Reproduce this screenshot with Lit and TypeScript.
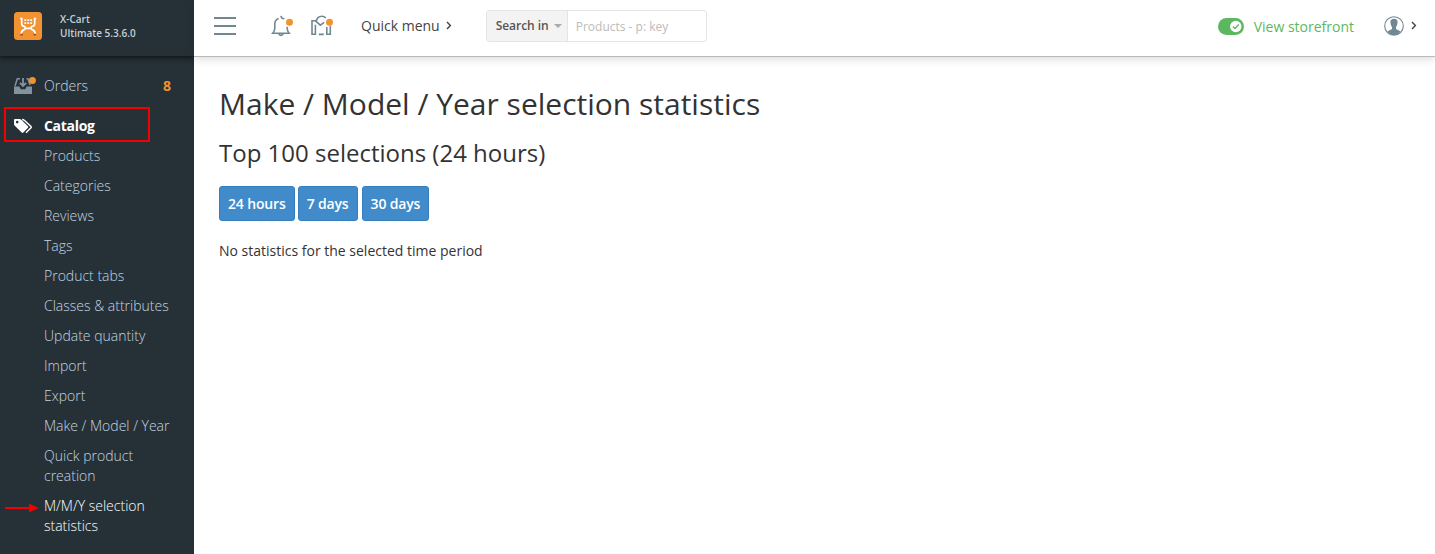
import { LitElement, html, css, svg } from "lit";
import { customElement } from "lit/decorators.js";

const links = [
  "Products", "Categories", "Reviews", "Tags", "Product tabs", "Classes & attributes",
  "Update quantity", "Import", "Export", "Make / Model / Year", "Quick product creation",
];

@customElement("side-menu")
class SideMenu extends LitElement {
  static styles = css`
    :host { display: flex; flex-direction: column; width: 194px; height: 554px; background: #253137; color: #c4d4e0; font-size: 14px; line-height: 20px; overflow: hidden; }
    .brand { display: flex; height: 56px; flex: none; padding: 12px 0 0 14px; box-sizing: border-box; box-shadow: 0 1px 5px 1px rgba(8, 14, 17, .75); gap: 18px; }
    .logo { display: block; flex: none; }
    .name { font-size: 10px; line-height: 14px; font-weight: 600; color: #c3d0d8; }
    .row { display: flex; align-items: center; height: 40px; padding-left: 14px; box-sizing: border-box; flex: none; }
    .orders { margin-top: 10px; font-weight: 300; }
    .row svg { width: 30px; height: 22px; flex: none; }
    .count { margin-left: auto; margin-right: 23px; color: #f1922f; font-weight: 700; }
    .catalog { width: 146px; height: 35px; margin: 1px 0 -1px 4px; padding: 2px 0 0 8px; border: 2px solid #f40000; color: #fff; font-weight: 700; letter-spacing: -.3px; }
    .list { padding: 0; margin: 0; list-style: none; width: 194px; font-weight: 300; }
    .list li { padding: 5px 20px 5px 44px; }
    .list .narrow { padding-right: 46px; }
    .list .active { display: flex; padding: 5px 40px 5px 4px; color: #fff; }
    .active svg { flex: none; width: 40px; height: 20px; }
  `;
  render() {
    return html`
      <div class="brand">
        <svg class="logo" width="28" height="28" viewBox="0 0 28 28">
          <rect width="28" height="28" rx="3.5" fill="#f19333"/>
          <circle cx="7.6" cy="22.4" r="1.3" fill="#b34a1b"/><circle cx="20.8" cy="22.4" r="1.3" fill="#b34a1b"/>
          <path d="M6.2 6.5H7.7V12Q7.9 14.4 10.9 14.7Q11.9 17.2 9.7 17.9Q7.4 18.8 7.2 21.8M22.2 6.5H20.7V12Q20.5 14.4 17.5 14.7Q16.5 17.2 18.7 17.9Q21 18.8 21.2 21.8M10.8 16.3H17.6" fill="none" stroke="#fff" stroke-width="1.7"/>
          <path d="M10.4 8.2H18.2M10.4 11.2H18.2" stroke="#fff" stroke-width="1.8" stroke-dasharray="1.8 1.15"/>
        </svg>
        <div class="name">X-Cart<br>Ultimate 5.3.6.0</div>
      </div>
      <div class="row orders">
        <svg viewBox="0 0 30 22">
          <path d="M0 11.5H5.3L6.7 14.2H11.3L12.7 11.5H18V19H0Z" fill="#83929c"/>
          <path d="M1 11L3.3 3.8H6M12.5 3.8H14L16 10" fill="none" stroke="#83929c" stroke-width="1.5"/>
          <path d="M9 3V10M5.9 7.8L9 11L12.1 7.8" fill="none" stroke="#83929c" stroke-width="1.8"/>
          <circle cx="18.4" cy="5.5" r="3.5" fill="#f1922f"/>
        </svg>
        <span>Orders</span><span class="count">8</span>
      </div>
      <div class="row catalog">
        <svg viewBox="0 0 30 22">
          <path fill-rule="evenodd" d="M0 5Q0 4 1 4H5.6Q6.4 4 7 4.5L14 11.2Q14.7 12 14 12.8L9.3 17.6Q8.5 18.4 7.7 17.6L.8 10.8Q0 10 0 9.2Z M3.2 5.8A1.3 1.3 0 1 0 3.2 8.4A1.3 1.3 0 1 0 3.2 5.8Z" fill="#fff"/>
          <path d="M8.2 4.6Q9.7 4.6 10.3 5.2L17 11.4Q17.6 12.1 17 12.8L12 17.8" fill="none" stroke="#fff" stroke-width="1.5"/>
        </svg>
        <span>Catalog</span>
      </div>
      <ul class="list">
        ${links.map((t) => html`<li class=${t.startsWith("Quick") ? "narrow" : ""}>${t}</li>`)}
        <li class="active">
          <svg viewBox="0 0 40 20"><path d="M1 12H26" stroke="#f40000" stroke-width="2"/><path d="M25 7.5L34.7 12L25 16.5Z" fill="#f40000"/></svg>
          <span>M/M/Y selection statistics</span>
        </li>
      </ul>`;
  }
}

const chevron = svg`<path d="M1 1L4.4 4.5L1 8" fill="none" stroke="#444" stroke-width="1.4"/>`;

@customElement("top-bar")
class TopBar extends LitElement {
  static styles = css`
    :host { display: flex; align-items: center; height: 57px; box-sizing: border-box; padding: 0 18px 5px 20px; border-bottom: 1px solid #bbb9bb; box-shadow: 0 1px 9px rgba(45, 30, 45, .2); background: #fff; font-size: 14px; line-height: 20px; color: #444; }
    svg { display: block; flex: none; }
    .bell { margin-left: 34px; }
    .news { margin-left: 15px; }
    .quick { margin-left: 26px; }
    .chev { margin-left: 6px; }
    .search { display: flex; margin-left: 34px; width: 221px; height: 32px; box-sizing: border-box; border: 1px solid #e4e4e4; border-radius: 3px; font-size: 12px; line-height: 32px; overflow: hidden; }
    .scope { display: flex; align-items: center; gap: 5px; width: 81px; box-sizing: border-box; padding-left: 9px; background: #f3f3f3; border-right: 1px solid #e4e4e4; font-weight: 600; color: #555; white-space: nowrap; letter-spacing: -.05px; }
    .hint { padding-left: 8px; color: #bbb; }
    .store { display: flex; align-items: center; gap: 10px; margin-left: auto; color: #5cb860; padding-top: 2px; }
    .user { margin-left: 30px; }
    .end { margin-left: 7px; }
  `;
  render() {
    return html`
      <svg width="22" height="20" viewBox="0 0 22 20"><path d="M0 2H22M0 10H22M0 18H22" stroke="#708894" stroke-width="2"/></svg>
      <svg class="bell" width="26" height="24" viewBox="0 0 26 24">
        <path d="M8.5 4.4Q4.8 5.8 4.8 10V14.5Q4.8 16.8 2.7 19.2H19.2Q17.2 16.8 17.2 14.5V12.8M10.8 2L12 4.2Q13.2 4.2 14.3 4.9M8.8 20Q11 22.8 13.2 20" fill="none" stroke="#708894" stroke-width="1.6"/>
        <circle cx="19.5" cy="8.3" r="3.5" fill="#f1922f"/>
      </svg>
      <svg class="news" width="24" height="24" viewBox="0 0 24 24">
        <path d="M4.4 6.7H1V20.2H4.4V10.8M5.2 7.7Q6 2.3 10.8 2.3Q13.5 2.3 14.7 4M3.8 6.3L9.3 11.2L13.2 8.3M15.8 13V20.2H19.3V11.7M7.8 20.4H12.8" fill="none" stroke="#708894" stroke-width="1.6"/>
        <circle cx="18.5" cy="8.3" r="3.5" fill="#f1922f"/>
      </svg>
      <span class="quick">Quick menu</span>
      <svg class="chev" width="6" height="9" viewBox="0 0 6 9">${chevron}</svg>
      <div class="search">
        <div class="scope"><span>Search in</span><svg width="8" height="4" viewBox="0 0 8 4"><path d="M0 0H8L4 4Z" fill="#aaa"/></svg></div>
        <div class="hint">Products - p: key</div>
      </div>
      <div class="store">
        <svg width="26" height="17" viewBox="0 0 26 17"><rect width="26" height="17" rx="8.5" fill="#5cb860"/><circle cx="17.8" cy="8.5" r="5.7" fill="#fff"/><path d="M14.9 8.4L17 10.5L20.8 6.5" fill="none" stroke="#5cb860" stroke-width="1.4"/></svg>
        <span>View storefront</span>
      </div>
      <svg class="user" width="20" height="20" viewBox="0 0 20 20">
        <circle cx="10" cy="10" r="9.3" fill="#fff" stroke="#708894" stroke-width="1.1"/>
        <path d="M6.4 6.3Q6.2 2.8 10 2.8Q13.8 2.8 13.6 6.3Q13.5 9.5 12 11V13L16.7 15.4Q14.2 19 10 19Q5.8 19 3.3 15.4L8 13V11Q6.5 9.5 6.4 6.3Z" fill="#708894"/>
      </svg>
      <svg class="end" width="6" height="9" viewBox="0 0 6 9">${chevron}</svg>`;
  }
}

@customElement("app-root")
class AppRoot extends LitElement {
  static styles = css`
    :host { display: grid; grid-template-columns: 194px 1fr; width: 100%; height: 554px; overflow: hidden; background: #fff; font-family: "Open Sans", sans-serif; color: #333; }
    .page { padding: 27px 25px 0; }
    h1, h2 { margin: 0; font-weight: 400; }
    h1 { font-size: 30px; line-height: 40px; }
    h2 { font-size: 24px; line-height: 32px; margin-top: 13px; }
    .buttons { display: flex; gap: 3px; margin-top: 17px; }
    button { height: 35px; border: 1px solid #357ebd; border-radius: 3px; background: #428bca; color: #fff; font: 600 14px/20px "Open Sans", sans-serif; letter-spacing: -.15px; padding: 0 8px; white-space: nowrap; }
    button:last-child { margin-left: 1px; }
    p { margin: 20px 0 0; font-size: 14px; line-height: 20px; }
  `;
  render() {
    return html`
      <side-menu></side-menu>
      <main>
        <top-bar></top-bar>
        <div class="page">
          <h1>Make / Model / Year selection statistics</h1>
          <h2>Top 100 selections (24 hours)</h2>
          <div class="buttons"><button>24 hours</button><button>7 days</button><button>30 days</button></div>
          <p>No statistics for the selected time period</p>
        </div>
      </main>`;
  }
}
